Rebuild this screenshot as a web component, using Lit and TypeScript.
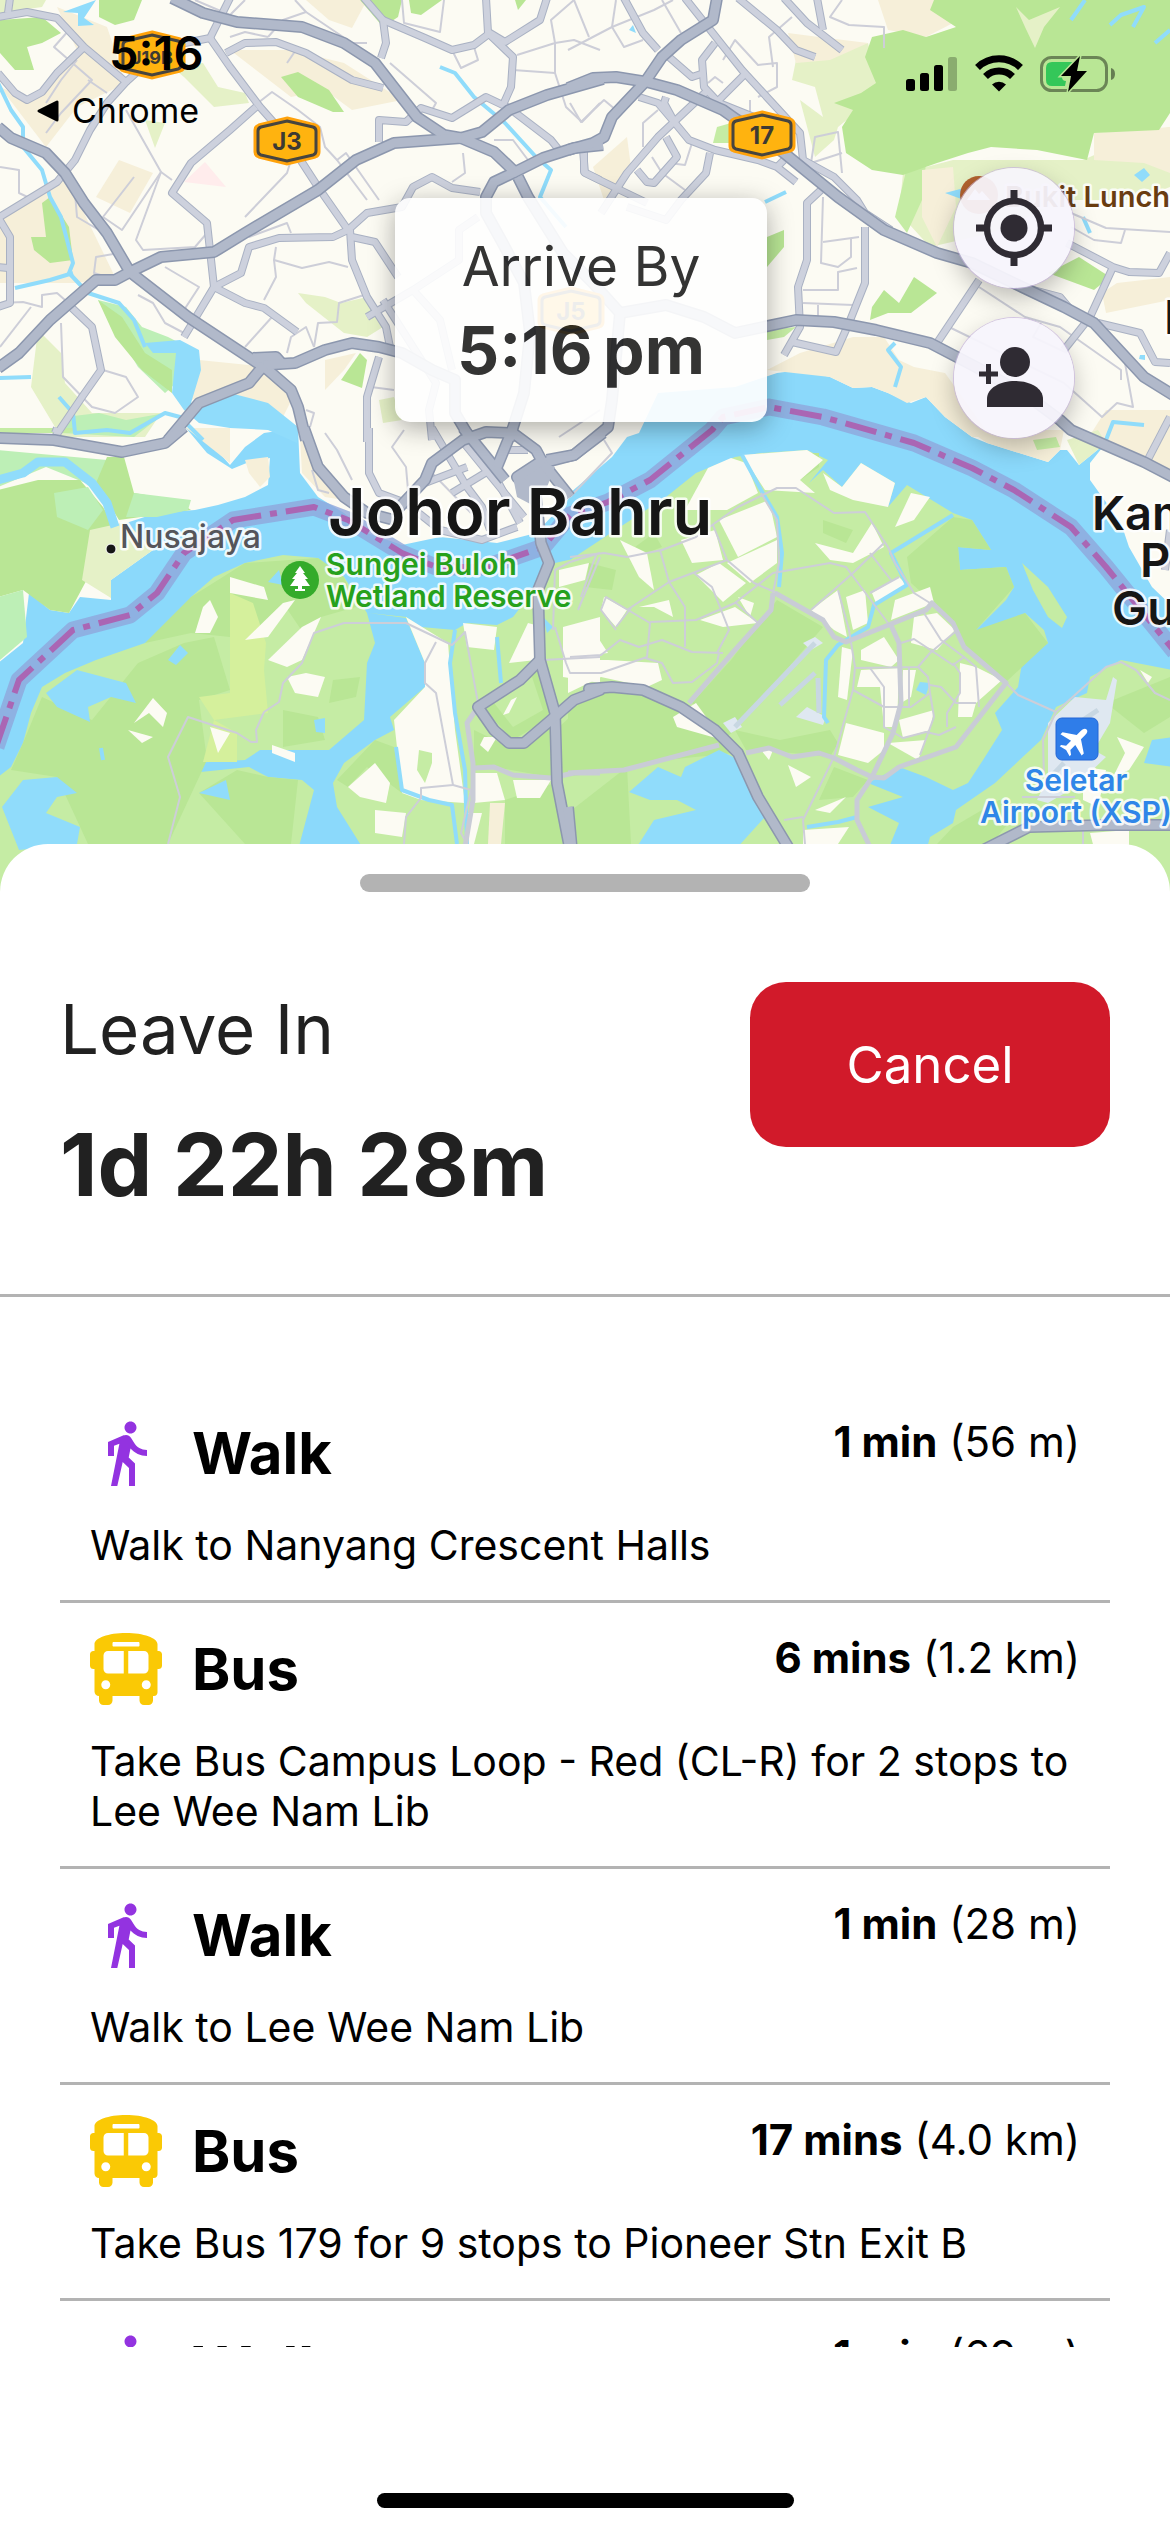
import { LitElement, html, css, svg, nothing } from "lit";
import { customElement, property } from "lit/decorators.js";

type Mode = "walk" | "bus";
interface Leg { mode: Mode; time: string; distance: string; detail?: string }

const LEGS: Leg[] = [
  { mode: "walk", time: "1 min", distance: "(56 m)", detail: "Walk to Nanyang Crescent Halls" },
  { mode: "bus", time: "6 mins", distance: "(1.2 km)", detail: "Take Bus Campus Loop - Red (CL-R) for 2 stops to Lee Wee Nam Lib" },
  { mode: "walk", time: "1 min", distance: "(28 m)", detail: "Walk to Lee Wee Nam Lib" },
  { mode: "bus", time: "17 mins", distance: "(4.0 km)", detail: "Take Bus 179 for 9 stops to Pioneer Stn Exit B" },
  { mode: "walk", time: "1 min", distance: "(69 m)" },
];

/* The map is divided into four tiles; a letter in a point list switches the
   tile that the following points belong to. */
const TILES: Record<string, [number, number]> = { A: [0, 0], B: [570, 0], C: [0, 430], D: [570, 430] };
const points = (list: string): string => {
  let origin = TILES.A;
  const out: string[] = [];
  for (const token of list.trim().split(/\s+/)) {
    if (TILES[token]) { origin = TILES[token]; continue; }
    const [x, y] = token.split(",").map(Number);
    out.push(`${Math.round(origin[0] + (x * 600) / 1568)},${Math.round(origin[1] + y / 3)}`);
  }
  return out.join(" ");
};

const STRAIT = `C -5,700 60,640 75,490 130,540 180,550 210,500 290,510 290,450 400,360 330,280 410,250 510,240 570,225 640,200 700,165 705,85 650,95
  605,118 540,70 485,-5 515,-5 600,105 640,50 690,10 780,-5 785,130 830,200 900,250 960,310 1050,345 1150,320 1300,340 1400,310 1500,190
  D 0,190 110,80 150,20 B 180,1300 230,1180 430,1160 540,1120 600,1110 680,1130 740,1165 790,1160 830,1180 890,1210 930,1190 980,1250 1050,1310
  D 1090,40 1250,95 1280,60 1300,60 1330,105 1400,40 1360,100 1360,150 1440,280 1460,350 1520,470 1575,530 1575,1400 C -5,1400`;
const SOUTH = [
  `C -5,1040 30,1010 60,940 80,850 110,770 170,730 250,690 380,640 440,600 500,500 560,440 640,400 740,375 830,385 900,440 960,550 980,640 960,700
   950,870 860,960 740,960 680,960 640,990 500,1000 500,1030 650,1010 700,1040 790,1050 820,1080 780,1260 -5,1400`,
  `C 965,550 1060,560 1100,590 1190,600 1220,580 1300,585 1340,560 1450,400 1568,370 D 0,390 130,290 250,200 330,130 430,80 500,70 620,60 675,90
   625,160 660,120 710,170 760,100 850,160 830,230 880,165 1000,250 1050,270 1100,360 1015,350 1020,420 1140,410 1160,470 1140,510 1060,600
   1090,620 1140,600 1190,550 1240,600 1250,640 1180,700 1170,770 1110,850 1130,900 1080,990 1040,1060 1000,1080 930,1040 860,1010 780,1060
   870,1100 780,1130 860,1180 830,1260 C 950,1260 880,1130 870,1060 900,1000 980,930 1030,900 1020,860 1110,770 1110,700 1060,565`,
  `D 900,1400 940,1220 1000,1180 1010,1140 1110,1060 1230,930 1270,830 1350,790 1360,740 1440,690 1575,720 1575,920 1520,930 1500,1000 1575,1010 1575,1400`,
  `D 1180,400 1250,470 1300,560 1285,595 1250,560 1210,480`,
];
const LAKES = [
  `C 5,1130 60,1050 150,1040 200,1090 150,1100 120,1150 210,1190 200,1242 50,1260`,
  `C 120,790 200,720 330,760 355,820 290,800 230,830 235,875 150,830`,
  `C 440,690 470,645 490,670 460,705`, `C 820,870 850,865 850,910 825,905`, `C 520,1090 590,1050 600,1110`,
  `D 155,1085 230,1010 290,1040 300,1010 390,960 430,985 480,1100 510,1160 430,1260 170,1260 220,1170 330,1140 280,1110 210,1110`,
  `D 915,755 940,760 930,795 905,780`,
  `A 380,1030 400,1060 460,1060 450,1180 480,1230 520,1270 600,1285 700,1290 775,1330 780,1280 700,1210 600,1180 500,1210 525,1110 520,1050 470,1020`,
  `A 165,35 250,0 220,55 245,75 205,78 205,40`, `B 1475,525 1500,505 1515,525 1495,545`, `B 980,580 1030,565 1030,600`,
  `C 700,455 730,420 740,465`, `C 1420,560 1445,590 1430,610`, `B 1490,1065 1503,1065 1503,1080 1488,1078`, `B 155,90 165,75 172,100`,
];
const CREEKS = [
  `A -5,250 30,330 60,380 60,440 110,510 130,590 160,650 190,790 180,820 230,880 310,910 350,960 380,1040`,
  `A 190,820 130,840 40,865`, `A 530,1320 470,1250 430,1240 340,1300 280,1290 195,1300 190,1240 155,1190`, `A -5,1135 80,1132`,
  `A 1150,200 1190,220 1240,290 1320,370 1400,470 1440,510 1410,590 1480,680`, `B 1345,0 1310,60`, `B 1410,75 1440,45 1500,20 1470,80`, `B 1530,130 1568,90`,
  `B 1340,650 1360,700`, `B 850,1030 830,1050 865,1100 850,1160`, `B 510,605 565,575`, `C 1190,600 1175,700 1190,850 1215,1020 1220,1242`,
  `C 1300,620 1310,760`, `D 450,75 500,180 540,260 555,370 545,470`, `D 1000,255 840,370 880,465 795,525 780,590 700,645 668,690 665,860 675,880`,
  `B 1400,1320 1420,1265 1500,1275`, `C 1035,950 1050,1080 1120,1110 1180,1125 1195,1242`, `D 620,1190 700,1175 750,1160`, `C 265,955 268,990`,
];
const RIVER = `C -5,150 60,130 100,95 170,95 240,160 280,220 300,290`;

/* [fill, outline] */
const DARK = "#b9e695", MID = "#c5eca4", PALE = "#e5f1c7", SAND = "#f6efd9", LAND = "#fcfbf3", MINT = "#bdefb6";
const NORTH_AREAS: [string, string][] = [
  [SAND, `A 150,20 280,80 330,250 200,320 120,440 0,260 80,300 200,150`], [SAND, `A 600,150 760,150 900,190 1050,300 920,330 850,270 760,290`],
  [SAND, `A 310,480 400,520 340,640 250,590`], [SAND, `A 180,530 220,640 300,830 200,850 0,850 0,650 130,560`], [SAND, `A 520,1080 700,1100 770,1180 740,1250 600,1180 500,1200`],
  [SAND, `A 800,0 960,0 920,85 860,60`], [SAND, `A 850,1080 930,1060 900,1110 850,1170`], ["#ffecec", `A 535,485 590,560 480,545`],
  [DARK, `A 0,60 110,50 160,100 110,130 70,140 90,210 40,210 0,160`], [DARK, `A 260,0 370,0 350,60 300,75 260,50`], [PALE, `A 0,0 120,0 110,20 0,40`],
  [DARK, `A 735,230 780,215 860,270 900,337 870,335 780,290`], [DARK, `A 130,590 180,680 190,780 130,790 90,750 80,710 120,710 110,610`],
  [MINT, `A 255,900 330,920 370,980 440,1010 520,1060 500,1110 430,1180 360,1100`], [DARK, `A 255,900 320,950 380,1060 450,1110 450,1180 370,1110 300,1010`],
  [PALE, `A 450,200 530,190 570,260 640,280 650,310 560,320 480,230`], [PALE, `A 380,360 430,370 405,445`],
  [PALE, `A 780,880 850,890 890,910 960,890 1000,980 960,1010 900,1000 800,910`], [PALE, `A 100,990 160,1060 170,1150 240,1240 420,1240 380,1310 160,1310 80,1160`],
  [MINT, `A 170,1250 260,1240 330,1260 430,1240 350,1310 160,1300`], [DARK, `A 940,1060 960,1080 945,1165 890,1140`],
  [DARK, `A 940,0 1050,0 1040,50 1000,80`], [DARK, `A 1070,0 1155,0 1100,45 1075,40`], [DARK, `A 1345,0 1375,0 1355,30`], [PALE, `A 990,1200 1030,1190 1050,1260 1000,1270`],
  [PALE, `B 590,180 780,130 810,280 700,380 690,420 640,470 600,300 660,350 640,260 580,240`], [SAND, `B 570,100 650,110 780,130 680,180 590,190`],
  [SAND, `B 805,0 960,0 1000,70 930,110 830,90`],
  [PALE, `B 870,520 1000,480 1340,480 1500,400 1568,380 1568,560 1480,600 1300,600 1100,700 940,740 860,640`], [SAND, `B 1370,400 1568,380 1568,520 1500,490 1370,480`],
  [SAND, `B 1390,880 1430,850 1568,830 1568,900 1400,940`], [MID, `B 880,500 930,490 920,600 880,700 850,650`],
  [DARK, `B 1000,0 1568,0 1568,340 1540,390 1370,400 1350,480 1220,450 1100,440 1040,460 960,490 870,525 790,510 720,460 710,380 740,330 690,310 760,280 800,250 770,170 790,110 870,90 930,110 1010,80 940,30 950,0`],
  [PALE, `B 1165,20 1200,60 1280,20 1240,80 1215,145 1190,80`], [SAND, `B 920,510 1000,500 1010,620 960,740 920,650`],
  [DARK, `B 1250,820 1330,770 1410,830 1370,870`], [DARK, `B 785,960 790,920 820,870 860,910 900,830 960,880 890,940 830,940`],
  [DARK, `B 515,710 560,690 560,740 515,800`], [MID, `B 515,990 590,980 560,1010 515,1020`], [SAND, `B 150,410 160,500 90,600 60,500`], [MID, `B 385,380 420,370 420,430 375,430`],
  [SAND, `B 515,1110 600,1060 740,1010 820,1010 860,1080 900,1100 980,1120 1100,1310 1050,1310 980,1250 930,1190 880,1210 830,1180 790,1160 740,1165 680,1130`],
  [SAND, `B 1400,1230 1568,1230 1568,1400 1350,1320`], [SAND, `D 1040,0 1290,0 1280,60 1250,95 1090,40`], [PALE, `D 1300,30 1380,0 1400,40 1330,105`], [MID, `D 1210,30 1270,20 1280,50 1220,60`],
  [SAND, `D 1510,80 1568,30 1568,130`],
  [SAND, `C 485,-5 600,-5 600,100`], [SAND, `C 640,90 700,80 705,140 680,170 650,130`], [SAND, `C 785,20 830,110 900,210 850,200 790,130`],
  [MINT, `C -5,60 280,90 270,180 120,110 -5,170`], [MID, `C -5,-5 200,-5 180,10 -5,10`],
  [DARK, `C -5,180 100,150 210,150 270,230 300,290 235,310 240,420 180,550 130,540 60,480 -5,500`], [MINT, `C -5,500 60,480 70,620 0,690`],
  [MINT, `C 140,190 230,170 270,240 230,300 150,260`],
  [DARK, `C 280,80 325,80 350,190 460,210 500,240 310,270 250,160`], [MINT, `C 350,190 500,210 490,240 410,260 330,260`], [PALE, `C 235,300 330,275 400,360 290,450 290,505 215,450`],
];
const SOUTH_AREAS: [string, string][] = [
  [DARK, `C 500,500 640,400 830,385 900,440 930,530 840,560 800,620 740,520 640,630 690,700 640,780 600,620 500,610 380,640`],
  [DARK, `C 60,940 110,800 240,870 360,700 480,640 560,620 600,780 520,810 540,990 440,1242 230,1242 150,1040 30,1020`],
  [DARK, `C 620,1020 700,1040 780,1050 760,1242 640,1242 520,1090`], ["#d5f09c", `C 600,490 660,520 695,640 690,720 700,850 560,870 520,800 600,790`],
  ["#d5f09c", `C 560,870 620,910 620,995 530,995`], [DARK, `C 870,750 940,740 930,800 860,820`], [DARK, `C 740,840 830,860 850,930 740,950`],
  [DARK, `C 980,930 1030,950 1050,1090 960,1010 910,1070 880,1050`], [DARK, `C 1240,900 1330,950 1440,880 1440,1040 1290,1010 1240,1010`],
  [DARK, `C 1460,890 1568,780 1568,1030 1470,1040`], [DARK, `C 1320,1110 1450,1060 1470,1242 1320,1242`], [DARK, `C 1260,830 1400,700 1440,860 1340,930`],
  [MID, `C 1290,820 1390,740 1420,840 1340,890`],
  [DARK, `D -5,800 100,785 200,790 300,850 430,970 250,990 150,1020 -5,1020`], [DARK, `D 540,510 660,590 430,900 410,920 320,820 420,690`],
  [DARK, `D 880,380 1000,260 1050,270 1100,360 1015,350 1020,420 1140,410 1160,470 1060,600 1190,550 1250,640 1140,755 1030,650 1000,580 940,510 890,460`],
  [DARK, `D 430,900 550,930 680,900 700,940 680,980 580,970 460,960`], [DARK, `D 570,70 650,70 650,110 600,150 560,110`], [DARK, `D -5,1150 150,1010 160,1242 -5,1242`],
  [DARK, `D 690,1010 780,1050 740,1100 650,1110`], [DARK, `D 170,350 220,310 240,350 200,370`], [DARK, `D 50,400 120,420 110,480 40,470`], [DARK, `D 660,270 740,300 720,340 660,310`],
  [LAND, `C 600,440 690,470 700,510 600,490`], [LAND, `C 550,510 570,560 550,610 510,610 530,530`], [LAND, `C 740,520 770,510 700,620 640,630`],
  [LAND, `C 790,590 840,560 820,610 790,690 750,710 700,690`], [LAND, `C 750,740 800,730 850,740 830,800 770,790`], [LAND, `C 400,805 437,850 425,890 390,850 350,880`],
  [LAND, `C 335,900 400,920 370,940`], [LAND, `C 1060,560 1170,640 1190,900 1215,1120 1100,1110 1050,1090 1030,870 1110,770 1110,700`], [LAND, `C 1210,580 1300,590 1290,660 1220,650`],
  [MID, `C 1095,960 1130,970 1130,1000 1110,1060 1090,1020`],
  [LAND, `C 1380,580 1420,590 1400,690 1330,700`], [LAND, `C 1470,590 1568,560 1568,760 1470,740`], [LAND, `C 910,1070 980,1000 1020,1060 1010,1120 940,1100`],
  [LAND, `C 1240,1030 1300,1030 1320,1110 1240,1120`], [LAND, `C 550,890 600,910 570,970`], [LAND, `C 980,1140 1060,1150 1050,1220 980,1210`], [LAND, `C 710,945 770,970 770,995 710,970`],
  [LAND, `C 1340,1050 1440,1050 1410,1105 1350,1105`], [LAND, `C 1460,420 1540,400 1530,450 1460,470`], [LAND, `C 1265,920 1300,920 1275,965 1255,945`], [LAND, `C 1220,1150 1260,1150 1240,1242 1220,1242`],
  [SAND, `C 1280,1120 1320,1120 1310,1242 1275,1242`], [LAND, `C 1350,800 1330,850 1315,855 1335,810`],
  [LAND, `D 360,115 420,85 460,100 490,190 410,240 300,240`], [LAND, `D 450,75 620,60 660,90 600,150 640,190 510,180`],
  [LAND, `D 660,130 710,170 760,100 850,160 830,230 740,210 680,180`], [LAND, `D 390,270 520,210 540,320 440,380`], [LAND, `D 410,400 540,330 540,400 470,460`],
  [LAND, `D 130,330 200,370 220,480 180,440`], [LAND, `D 290,330 380,300 400,390 320,400`], [LAND, `D 640,340 740,370 790,280 820,350 740,400 680,390`],
  [LAND, `D 390,400 460,460 400,515 330,435`], [LAND, `D 630,540 700,480 725,620 690,600`], [LAND, `D 890,190 940,200 900,270 850,290`], [LAND, `D 790,490 860,440 880,465 800,520`],
  [LAND, `D 850,510 940,470 950,520 840,570`], [LAND, `D 900,560 960,550 1005,600 960,660 890,640`], [LAND, `D 760,720 860,715 855,890 820,890 810,770 750,770`],
  [LAND, `D 710,650 740,660 725,810 700,800`], [LAND, `D 860,870 950,840 940,900 870,925`], [LAND, `D 1060,710 1130,750 1060,820 1050,860 1015,860 1020,700`],
  [LAND, `D 830,940 930,930 910,990`], [LAND, `D 720,880 820,910 820,960 780,1000 700,975`], [LAND, `D 570,1005 630,1040 590,1070`], [LAND, `D 270,860 330,820 400,930 280,890`],
  [LAND, `D 640,1140 720,1100 680,1150`], [LAND, `D 610,1200 730,1190 700,1242 610,1242`], [LAND, `D 760,660 820,620 860,690 840,710 760,690`], [LAND, `D -5,590 60,600 100,670 -5,680`],
  [LAND, `D -5,690 100,690 230,700 240,750 200,770 80,740 -5,790`], [LAND, `D 90,500 150,540 120,590 80,540`], [LAND, `D 180,530 260,510 270,560 220,530`], [LAND, `D 340,570 430,530 490,580 400,590`],
  [LAND, `D 720,500 770,480 780,580 740,600`], [LAND, `D 500,960 530,960 520,990`], [LAND, `D 440,500 480,520 470,560`], [LAND, `D 870,720 905,720 890,800 865,820`],
  [LAND, `D 1430,920 1500,950 1460,1020 1420,1040 1450,970`], [LAND, `D 1340,1010 1400,1020 1380,1130 1340,1110`], [LAND, `D 1490,720 1520,740 1510,760`], [LAND, `D 1360,1210 1460,1200 1460,1300 1380,1300`],
  [DARK, `D 1400,820 1568,740 1568,860 1500,910`], [DARK, `D 1000,1190 1120,1110 1180,1130 1100,1242 960,1242`],
  ["#dfe8f1", `D 1250,880 1320,800 1400,810 1420,740 1430,750 1410,880 1370,960 1400,980 1320,1070 1250,1120 1220,1110 1250,1040`],
  ["#dfe8f1", `D 400,880 430,860 450,890 420,910`], ["#dfe8f1", `D 610,640 640,620 660,640 630,660`], ["#dfe8f1", `D 590,860 620,830 670,860 660,885`],
];

const MINOR = [
  `A 700,110 640,95 600,110`, `A 180,90 140,140 240,240 160,340 120,400`, `A 230,240 280,280`, `A 200,180 160,240 120,310`, `A 330,330 420,515 355,720 375,750 510,740 540,700`, `A 350,530 270,650 320,690 420,515 450,540`,
  `A 640,340 710,275 780,330 835,380 850,440 880,480 905,460 990,600`, `A 880,480 960,600`, `A 1050,0 1055,70 1150,95 1160,0`, `A 1020,190 1140,310 1130,330`, `A 1340,210 1450,220 1450,130 1500,120 1568,150`,
  `A 1350,165 1450,130 1440,60 1500,0`, `A 1450,220 1480,320 1520,365 1568,310`, `A 430,800 520,860 480,930`, `A 720,740 715,780 790,805 860,785 910,800`, `A 715,780 720,830 690,900`, `A 710,950 640,1040`,
  `A 360,885 400,910 430,970 480,1000`, `A 820,1040 830,970 880,965 885,910 950,885`, `A 160,970 165,1130 240,1220 300,1240 360,1190 330,1130 270,1110`,
  `A 0,910 60,905 110,920 110,885 150,880 190,920`, `A 0,1040 80,920`, `A 0,500 50,510 50,580 90,600`, `A 195,580 200,650 260,690`, `A 310,760 250,770 245,820 280,830`, `A 640,650 750,520 760,480`,
  `A 1210,460 1215,520 1180,545`, `A 1290,420 1340,420 1380,480`, `A 970,1160 1030,1170`, `A 750,1060 760,1010 800,980 820,1040`, `A 650,710 750,670 760,700`, `A 510,0 600,45 640,0`, `A 700,110 740,60 800,35 770,0`,
  `A 800,35 920,130 960,130`, `A 750,190 780,140`, `A 1180,150 1205,205 1250,180 1240,140`, `A 800,1230 820,1240 810,1280`,
  `B -5,150 110,80 220,30 270,0`, `B 10,0 50,110`, `B 110,80 140,140 190,120`, `B 110,80 120,0`, `B 240,0 290,100`, `B 400,180 430,120 490,195 540,190 540,260 490,290`, `B 580,50 520,110 530,200`,
  `B 710,0 680,50 730,75 820,80 820,145`, `B 630,490 640,410 700,395 710,520`, `B 630,490 710,460`, `B 190,440 190,370 230,330`, `B 660,590 655,790 700,800 735,770 735,715`, `B 660,725 755,712`,
  `B 610,870 700,870 700,815 750,805`, `B 610,910 740,915`, `B 648,915 648,950`, `B 1070,860 1190,950 1280,980 1440,1110 1440,1140`, `B 1310,640 1400,685 1568,695`,
  `B 1450,690 1440,730 1370,720 1310,680`, `B 990,980 1290,1150 1390,1250 1430,1210 1470,1220 1450,1090`, `B 0,310 30,365 90,300 120,330`, `B 360,250 380,230 400,250`, `B 470,340 470,300`,
  `B 320,430 300,495 260,490`, `B 215,470 240,520 300,570`, `B 1230,970 1210,1010 1300,1060`,
  `C 440,1242 470,1100 440,980 490,860 620,910 655,935 672,935 670,900 690,845 730,815 740,760 790,700 820,610 900,578 1060,580 1180,645 1215,605 1250,820`,
  `C 1140,635 1110,700 1110,760 1140,790 1185,1065 1100,1075 1100,1105 1060,1160 1055,1242`, `C 1185,1065 1230,1080 1205,1210 1220,1242`, `C 1420,690 1568,680`, `C 1445,600 1450,420 1490,395 1568,370`,
  `C 1450,590 1480,700 1490,730 1568,730`, `C 1055,0 1025,50 1060,110 1065,180`, `C 850,10 880,60 920,150`, `C 1130,130 1230,250`, `C 1460,20 1568,-60`, `C 1568,380 1510,540`,
  `C 815,120 830,180 860,190`,
  `D 0,200 110,70 90,30`, `D 0,380 90,370 150,380 240,360 330,320 380,280 440,230 540,175 590,175 690,250 770,245 830,350 850,400 900,490 940,520`,
  `D 375,285 410,390 480,460 540,490`, `D 500,190 540,270 547,400 530,490`, `D 150,540 260,455 410,390`, `D 235,360 260,455 300,530 300,650`, `D 325,430 370,470 415,600 385,670`,
  `D 120,600 80,540 95,500 210,580 200,680 80,730 0,730`, `D 0,680 80,675 130,630 180,650 240,630 320,665 400,670`, `D 120,590 160,535`, `D 210,575 330,570 430,520 530,430 680,400 720,410 830,580`,
  `D 630,540 740,430 820,340`, `D 785,370 840,450`, `D 785,490 860,440`, `D 430,515 490,580`, `D 700,480 730,600 745,710 740,780 690,980 610,1170 615,1242`, `D 745,715 910,710 940,670 1005,605`,
  `D 740,780 820,830 890,830 940,790 935,740 910,710`, `D 785,715 820,770 820,890 870,925 930,905 965,915 1010,890`, `D 920,540 970,630 1030,680 1060,710 1070,830`, `D 865,640 900,628 1000,705 1030,680`,
  `D 940,765 970,770 1010,820 1060,820`, `D 940,790 952,860 915,975`, `D 1000,700 1020,730 1020,790 985,850 985,890`, `D 195,685 240,700 270,760 320,755 385,700 390,670`, `D 885,715 885,830`,
  `D 1140,760 1170,795 1270,845 1235,930 1240,1040`, `D 1270,845 1400,710 1440,695 1480,720 1530,790 1568,810`, `D 30,500 60,400 70,370`, `D 560,1170 610,1160`, `D 1180,1100 1320,1100`, `D 1340,1200 1340,1300`,
];
const SECONDARY = [
  `A -5,50 70,35 150,55 220,140 330,245 280,310 235,390 195,480 150,545 -5,655`, `A 20,40 25,-5`, `A 220,140 150,220 110,275 70,300 40,280 -5,220`, `A 330,245 430,140 550,115 600,-5`,
  `A 550,115 600,200 680,320 740,400 830,560 910,690 960,640 1050,620 1080,560 1130,530 1180,565 1255,577`, `A 670,320 600,390 500,490 450,580 540,670 560,860 480,1010`,
  `A 560,860 640,910 690,925 775,995`, `A 560,860 630,820 650,740 730,715 870,710 910,690`, `A 915,690 920,780 960,890 1010,980 1020,1040`, `A 920,710 980,725 1040,830`, `A 590,160 640,130 720,125 800,160 920,240 1000,265`,
  `A 950,-5 1000,60 1010,130 995,175`, `A 1000,60 1110,115 1180,150 1240,135 1280,100 1320,125 1410,60 1430,-5`, `A 1270,-5 1275,100 1340,170 1335,260 1315,315`,
  `A 990,425 990,360 1060,365 1100,325 1180,355 1270,290 1330,325 1440,420 1460,450`, `A -5,650 25,710 25,910 -5,920`, `A 185,920 240,980 265,1110 215,1190 145,1310`, `A 960,1325 960,1190 990,1070`,
  `A 1525,450 1525,515 1568,540`, `A 1250,650 1200,690 1200,780 1080,870 960,950`, `A -5,800 20,805`, `A 1130,1320 1120,1230 1140,1150 1000,900`, `A 1080,870 1150,960 1180,1110`,
  `B 140,-5 190,100 230,150`, `B 300,-5 450,210 600,400 610,480 690,530 750,600 770,640 840,690`, `B 440,-5 540,90 590,150 640,170`, `B 560,-5 620,70 710,150`, `B 645,-5 660,90`, `B 380,130 345,180 350,260 390,310 480,350`,
  `B 260,170 320,230 350,220`, `B 180,290 230,310 275,370 310,420 380,450 490,480 540,500 590,545`, `B 360,270 230,410 150,520 80,640`, `B 460,220 390,300`, `B 250,410 280,470 220,550 200,545 175,510`,
  `B 365,460 355,520 290,600 250,660 150,620`, `B 35,450 40,520 130,570 200,610`, `B 655,570 620,610 620,780 595,860 600,980 558,1065`, `B 770,680 770,850 730,970 695,1055 580,1025`, `B 1070,840 960,1030`,
  `B 1300,730 1420,800 1460,815 1540,820 1568,760`, `B 1420,800 1360,950 1290,1050`, `B 1380,970 1490,1000 1530,1085 1568,1090`, `B 1180,860 1280,890 1310,930`, `B 1568,1250 1500,1400`, `B 250,290 245,310 275,370`,
  `B 540,500 560,480`, `C 965,-5 965,130 990,190 1060,220 1150,300 1260,330 1350,290`, `C 1110,160 1220,110`, `C 1130,-5 1220,170 1260,230 1280,300`, `C 1200,20 1370,260`, `C 1180,190 1280,120`, `C 145,10 150,-5`, `C 1300,150 1360,280`,
  `C 1322,60 1380,60`, `D 1568,300 1555,420`,
];
const PLAIN = [
  `D 535,490 660,570 690,620 720,635 930,540 945,520 1000,580 1030,650 1140,760 1010,950 860,1010 820,1045 790,1040 750,1020 690,985 650,970 580,980 520,955 460,970`,
  `D 530,490 525,540 430,660 310,820`, `D 835,580 860,640 865,820 845,910 790,1040 750,1110 750,1170 785,1250`, `C 1568,1028 1500,1030 1440,1045 1340,1035 1290,1010 1240,1015`, `D -5,1030 140,1020 390,945`,
  `C 1250,830 1220,880 1235,1000 1235,1110 1215,1250`,
];
const MAJOR = [
  `A 450,-5 530,40 620,65 790,80 900,130 980,190 1090,350 1160,405 1205,415 1260,395 1330,330 1430,285 1575,238`, `A 1205,415 1290,455 1345,515 1420,475 1500,445 1575,435`,
  `A 1345,515 1290,545 1270,590 1270,640 1310,720 1370,850 1385,1000 1370,1180 1330,1320`, `A 1355,530 1380,590 1470,760 B 60,850 130,940 110,1200 100,1280 C 1500,75 1420,100`,
  `A -5,380 30,415 120,460 170,520 220,610 280,700 340,815 490,950 660,1080 700,1110 760,1170 780,1220 800,1320`,
  `A -5,1105 50,1060 130,960 250,840 300,840 340,815 420,770 560,755 640,700 830,570 930,480 1030,430 1205,415`, `A 660,1075 720,1070 740,1095`,
  `A 690,1095 770,1090 850,1050 920,1030 990,1040 1050,1060 1130,1110 1190,1140 1190,1240 1230,1320`, `A 690,1095 650,1150 520,1210 440,1320`,
  `B -5,265 60,235 120,230 200,245 280,270 400,330 560,460 700,590 820,690 960,760 1050,790 1180,860 1290,920 1370,970 1500,1130 1575,1185`,
  `B 385,-5 375,60 290,120 240,170 195,245 110,350 90,410 60,430 -5,450`, `B 130,940 250,915 350,950 430,1000 590,960 690,965 800,990 940,1030 1060,1100 1200,1190 1280,1260 D 1310,0 1500,95 1575,140`,
  `C -5,25 140,30 320,65 430,40 480,-10`, `C 795,-5 830,110 900,200 960,250 1030,270`, `C 1030,250 1110,150 1130,100 1210,30 1270,5 1340,10 1400,60 1420,100 1490,200`, `C 1210,-5 1320,150`, `C 1340,-5 1300,110`, `C 1430,90 1500,75 1575,10`,
  `C 1420,90 1350,140 1400,200 1415,340 1435,400 1405,480 1410,690 1450,850 1455,1060 1490,1260`,
  `C 1410,690 1360,750 1250,830 1290,900 1330,940 1370,940 1440,870 1500,810 1568,780 D 50,778 110,770 190,780 290,830 380,900 440,970 490,1100 575,1260`, `D -5,1130 5,1260`, `D 1080,1260 1200,1190 1400,1185 1575,1185`,
];
const BORDER = `C -10,950 50,750 190,600 340,555 410,490 480,370 610,270 820,230 910,270 1050,370 1140,410 1270,410 1420,350 D 0,255 100,215 210,150 370,0
  B 400,1250 520,1220 660,1250 900,1330 D 1050,115 1160,180 1310,290 1400,410 1580,665`;

const lines = (list: string[], cls: string) => list.map((l) => svg`<polyline class=${cls} points=${points(l)}></polyline>`);
const areas = (list: [string, string][]) => list.map(([fill, l]) => svg`<polygon fill=${fill} points=${points(l)}></polygon>`);
const shield = (x: number, y: number, label: string, cls = "") => svg`
  <g transform="translate(${x} ${y})">
    <path d="M0-22 28-15Q31-14 31-11V11Q31 14 28 15L0 22-28 15Q-31 14-31 11V-11Q-31-14-28-15Z" fill="#ffb30f" stroke="#ffa20a" stroke-width="5"></path>
    <path d="M0-20 26-14Q29-13 29-10V10Q29 13 26 14L0 20-26 14Q-29 13-29 10V-10Q-29-13-26-14Z" fill="#ffb30f" stroke="#47453f" stroke-width="3"></path>
    <text class="route ${cls}" y="9">${label}</text>
  </g>`;

@customElement("route-map")
export class RouteMap extends LitElement {
  static styles = css`
    :host { display: block; }
    svg { display: block; width: 100%; height: 100%; font-family: Inter, "Liberation Sans", sans-serif; }
    polyline { fill: none; stroke-linejoin: round; }
    .creek { stroke: #90dcfb; stroke-width: 4; }
    .river { stroke: #90dcfb; stroke-width: 9; }
    .minor { stroke: #cdced8; stroke-width: 2; }
    .plain { stroke: #c9ccd6; stroke-width: 5; }
    .secondary-edge { stroke: #a9b1c3; stroke-width: 8; }
    .secondary { stroke: #cdd1dd; stroke-width: 6; }
    .major-edge { stroke: #8c97ae; stroke-width: 12; }
    .major { stroke: #b1b9ca; stroke-width: 9; }
    .runway { stroke: #c8d7e2; stroke-width: 5; }
    .border-band { stroke: #8fa6dc; stroke-opacity: 0.8; stroke-width: 17; }
    .border-line { stroke: #aa66b4; stroke-width: 6; stroke-dasharray: 32 9 7 9; }
    text { paint-order: stroke; stroke: #ffffff; stroke-opacity: 0.85; stroke-width: 5; stroke-linejoin: round; font-weight: 600; }
    .route { font-size: 24px; font-weight: 700; fill: #3d3a33; stroke: none; text-anchor: middle; }
    .route-long { font-size: 18px; }
    .city { font-size: 65px; fill: #161616; }
    .town { font-size: 47px; fill: #161616; }
    .suburb { font-size: 32px; font-weight: 500; fill: #55555a; }
    .park { font-size: 30px; fill: #26a11c; }
    .peak { font-size: 29px; fill: #6a3d12; }
    .airport { font-size: 30px; fill: #2f86e8; text-anchor: middle; }
  `;
  render() {
    return html`<svg viewBox="0 0 1170 892" preserveAspectRatio="xMidYMin slice" role="img" aria-label="Map of Johor Bahru">
      <rect width="1170" height="892" fill=${LAND}></rect>
      <polygon points=${points(STRAIT)} fill="#8bd9fb"></polygon>
      ${areas(NORTH_AREAS)}
      ${SOUTH.map((l) => svg`<polygon fill=${MID} points=${points(l)}></polygon>`)}
      ${areas(SOUTH_AREAS)}
      ${LAKES.map((l) => svg`<polygon fill="#90dcfb" points=${points(l)}></polygon>`)}
      ${lines(CREEKS, "creek")}${lines([RIVER], "river")}
      ${lines([`D 430,890 640,640`, `D 550,825 640,730`, `D 648,745 650,850`, `D 1290,1000 1250,1050`, `D 1340,870 1380,840`], "runway")}
      ${lines(MINOR, "minor")}${lines(PLAIN, "plain")}
      ${lines(SECONDARY, "secondary-edge")}${lines(SECONDARY, "secondary")}
      ${lines([BORDER], "border-band")}${lines([BORDER], "border-line")}
      ${lines(MAJOR, "major-edge")}
      <polygon points=${points("C 1340,140 1400,90 1450,110 1430,170 1400,230 1350,200")} fill="#b1b9ca"></polygon>
      ${lines(MAJOR, "major")}
      ${shield(152, 55, "J19B", "route-long")}${shield(287, 141, "J3")}${shield(762, 135, "17")}${shield(571, 311, "J5")}
      <text class="city" x="328" y="535">Johor Bahru</text>
      <circle cx="111" cy="549" r="5" fill="#161616" stroke="#fff" stroke-width="1"></circle>
      <text class="suburb" x="120" y="548">Nusajaya</text>
      <circle cx="300" cy="580" r="19" fill="#34ab2a"></circle>
      <path d="M300 566l5 7h-2l5 6h-3l5 7h-8v3h3v2h-10v-2h3v-3h-8l5-7h-3l5-6h-2z" fill="#fff"></path>
      <text class="park" x="326" y="575">Sungei Buloh</text>
      <text class="park" x="326" y="607">Wetland Reserve</text>
      <circle cx="979" cy="195" r="19" fill="#b2622e"></circle>
      <path d="M967 200l8-11 4 5 3-3 8 9z" fill="#fff"></path>
      <text class="peak" x="1005" y="207">Bukit Lunch</text>
      <text class="town" x="1164" y="334">P</text>
      <text class="town" x="1092" y="530">Kam</text>
      <text class="town" x="1140" y="577">P</text>
      <text class="town" x="1112" y="625">Gu</text>
      <rect x="1056" y="718" width="42" height="42" rx="6" fill="#2f7de9" stroke="#2567d6"></rect>
      <path d="M0-15c2 0 3 2 3 5v6l12 8v3L3 4v7l4 3v2l-7-2-7 2v-2l4-3V4l-12 3V4l12-8v-6c0-3 1-5 3-5z" transform="translate(1076 740) rotate(45)" fill="#fff"></path>
      <text class="airport" x="1076" y="791">Seletar</text>
      <text class="airport" x="1076" y="823">Airport (XSP)</text>
    </svg>`;
  }
}

const WALK = svg`<svg viewBox="0 0 24 24" aria-hidden="true"><path fill="#9333e0" d="M13.5 5.5c1.1 0 2-.9 2-2s-.9-2-2-2-2 .9-2 2 .9 2 2 2zM9.8 8.9L7 23h2.1l1.8-8 2.1 2v6h2v-7.5l-2.1-2 .6-3C14.8 12 16.8 13 19 13v-2c-1.9 0-3.5-1-4.3-2.4l-1-1.6c-.4-.6-1-1-1.7-1-.3 0-.5.1-.8.1L6 8.300V13h2V9.600l1.800-.7"></path></svg>`;
const BUS = svg`<svg viewBox="0 0 512 512" aria-hidden="true"><path fill="#fac905" d="M488 128h-8V80c0-44.800-99.200-80-224-80S32 35.200 32 80v48h-8c-13.250 0-24 10.740-24 24v80c0 13.250 10.750 24 24 24h8v160c0 17.670 14.330 32 32 32v32c0 17.670 14.330 32 32 32h32c17.670 0 32-14.330 32-32v-32h192v32c0 17.670 14.330 32 32 32h32c17.670 0 32-14.330 32-32v-32h6.400c16 0 25.600-12.800 25.600-25.600V256h8c13.250 0 24-10.750 24-24v-80c0-13.260-10.750-24-24-24zM160 72c0-4.420 3.580-8 8-8h176c4.420 0 8 3.580 8 8v16c0 4.420-3.580 8-8 8H168c-4.420 0-8-3.580-8-8V72zm-48 328c-17.670 0-32-14.330-32-32s14.330-32 32-32 32 14.330 32 32-14.330 32-32 32zm128-112H128c-17.670 0-32-14.330-32-32v-96c0-17.670 14.330-32 32-32h112v160zm32 0V128h112c17.670 0 32 14.330 32 32v96c0 17.670-14.330 32-32 32H272zm128 112c-17.670 0-32-14.330-32-32s14.330-32 32-32 32 14.330 32 32-14.330 32-32 32z"></path></svg>`;

@customElement("route-leg")
export class RouteLeg extends LitElement {
  @property({ attribute: false }) leg!: Leg;
  static styles = css`
    :host { display: flex; flex-direction: column; gap: 30px; padding: 30px; border-bottom: 3px solid #b3b3b3; }
    .head { display: flex; align-items: flex-start; gap: 30px; }
    .head svg { width: 72px; height: 72px; flex: none; }
    h2 { flex: 1; margin: 0; font-size: 58px; line-height: 73px; font-weight: 700; }
    p { margin: 0; font-size: 41px; line-height: 50px; }
    .time { font-size: 42px; }
    strong { font-weight: 700; }
  `;
  render() {
    const { mode, time, distance, detail } = this.leg;
    return html`<div class="head">
        ${mode === "walk" ? WALK : BUS}
        <h2>${mode === "walk" ? "Walk" : "Bus"}</h2>
        <p class="time"><strong>${time}</strong> ${distance}</p>
      </div>
      ${detail ? html`<p>${detail}</p>` : nothing}`;
  }
}

@customElement("app-root")
export class AppRoot extends LitElement {
  static styles = css`
    :host { display: flex; flex-direction: column; height: 100vh; overflow: hidden; position: relative; background: #fff; color: #000;
      font-family: Inter, "Liberation Sans", sans-serif; }
    button { font: inherit; border: 0; padding: 0; cursor: pointer; }
    .top { position: relative; flex: none; height: 892px; }
    route-map { position: absolute; inset: 0; }
    .status { position: absolute; inset: 0 0 auto 0; display: flex; justify-content: space-between; align-items: flex-start; padding: 24px 54px 0 36px; }
    .clock { display: flex; flex-direction: column; }
    time { padding-left: 73px; font-size: 47px; line-height: 58px; font-weight: 600; }
    .back { display: flex; align-items: center; gap: 12px; background: none; color: #000; font-size: 34px; line-height: 58px; }
    .back svg { width: 24px; height: 24px; }
    .signals { display: flex; align-items: center; gap: 16px; padding-top: 31px; }
    .signals svg { display: block; height: 38px; }
    .arrive { position: absolute; top: 198px; left: calc(50% - 190px); width: 372px; height: 224px; box-sizing: border-box; padding-top: 30px;
      border-radius: 15px; background: #fff; color: #212121; opacity: 0.91; text-align: center; box-shadow: 0 6px 26px rgba(0, 0, 0, 0.35); }
    .arrive-label { font-size: 55px; line-height: 76px; }
    .arrive-time { font-size: 66px; line-height: 92px; font-weight: 700; }
    .tools { position: absolute; top: 168px; right: 96px; display: flex; flex-direction: column; gap: 30px; }
    .tool { width: 120px; height: 120px; border-radius: 50%; background: rgba(247, 244, 252, 0.94); box-shadow: 0 0 0 1px rgba(200, 180, 225, 0.7), 0 10px 24px rgba(0, 0, 0, 0.25); }
    .tool svg { display: block; width: 120px; height: 120px; }
    .sheet { position: relative; display: flex; flex-direction: column; flex: 1; min-height: 0; margin-top: -48px; border-radius: 48px 48px 0 0; background: #fff; }
    .grip { align-self: center; flex: none; width: 450px; height: 18px; margin-top: 30px; border-radius: 9px; background: #b3b3b3; }
    header { display: flex; justify-content: space-between; align-items: flex-start; padding: 90px 60px 75px; border-bottom: 3px solid #b3b3b3; color: #212121; }
    .lead { display: flex; flex-direction: column; gap: 34px; }
    .lead-label { font-size: 69px; line-height: 94px; }
    .lead-time { margin: 0; font-size: 87px; line-height: 109px; font-weight: 700; }
    .cancel { width: 360px; height: 165px; border-radius: 36px; background: #d11a2a; color: #fff; font-size: 51px; }
    ul { flex: 1; min-height: 0; margin: 90px 60px 0; padding: 0; list-style: none; overflow-y: auto; scrollbar-width: none; }
    footer { display: flex; flex: none; justify-content: center; align-items: flex-end; height: 185px; padding-bottom: 24px; box-sizing: border-box; }
    .home { width: 417px; height: 15px; border-radius: 8px; background: #000; }
  `;
  render() {
    return html`
      <div class="top">
        <route-map></route-map>
        <div class="arrive">
          <div class="arrive-label">Arrive By</div>
          <div class="arrive-time">5:16\u202fpm</div>
        </div>
        <div class="tools">
          <button class="tool" aria-label="Centre on my location"><svg viewBox="0 0 120 120" aria-hidden="true">
            <circle cx="60" cy="60" r="13.5" fill="#2f2b33"></circle>
            <circle cx="60" cy="60" r="27" fill="none" stroke="#2f2b33" stroke-width="6.5"></circle>
            <path d="M60 22v12M60 86v12M22 60h12M86 60h12" stroke="#2f2b33" stroke-width="7"></path></svg></button>
          <button class="tool" aria-label="Add a contact"><svg viewBox="0 0 120 120" aria-hidden="true">
            <circle cx="61" cy="44" r="15" fill="#2f2b33"></circle>
            <path d="M33 89V81C33 70 46 63 61 63S89 70 89 81V89Z" fill="#2f2b33"></path>
            <path d="M34.500 46v20M25 56h19" stroke="#2f2b33" stroke-width="5"></path></svg></button>
        </div>
        <div class="status">
          <div class="clock">
            <time>5:16</time>
            <button class="back"><svg viewBox="0 0 24 24" aria-hidden="true"><path d="M3 12 21 3V21Z" stroke="#000" stroke-width="3" stroke-linejoin="round"></path></svg>Chrome</button>
          </div>
          <div class="signals">
            <svg viewBox="0 0 52 38" width="52" aria-hidden="true">
              <rect y="24" width="9" height="12" rx="2.5"></rect><rect x="14" y="18" width="9" height="18" rx="2.5"></rect>
              <rect x="28" y="10" width="9" height="26" rx="2.5"></rect><rect x="42" y="2" width="9" height="34" rx="2.5" opacity=".25"></rect></svg>
            <svg viewBox="0 0 50 38" width="50" aria-hidden="true">
              <path d="M3.5 12.500A31 31 0 0 1 46.500 12.500" fill="none" stroke="#000" stroke-width="7"></path>
              <path d="M11.500 21.500A19.500 19.500 0 0 1 38.500 21.500" fill="none" stroke="#000" stroke-width="7"></path>
              <path d="M25 36.500 18 29.500A10 10 0 0 1 32 29.500Z"></path></svg>
            <svg viewBox="0 0 76 38" width="76" aria-hidden="true">
              <rect x="1.5" y="2.500" width="65" height="33" rx="10" fill="none" stroke="#000" stroke-opacity=".42" stroke-width="3"></rect>
              <path d="M71 13Q75 14 75 19T71 25Z" opacity=".45"></path>
              <path d="M12 7H33L22 22Q22 26 26 26L25 31H12Q6 31 6 25V13Q6 7 12 7Z" fill="#34c759"></path>
              <path d="M40 1 21 21H31L28 37 47 16H37Z" stroke="#b9e695" stroke-width="3" paint-order="stroke"></path></svg>
          </div>
        </div>
      </div>
      <section class="sheet">
        <div class="grip"></div>
        <header>
          <div class="lead">
            <div class="lead-label">Leave In</div>
            <h1 class="lead-time">1d 22h 28m</h1>
          </div>
          <button class="cancel">Cancel</button>
        </header>
        <ul>${LEGS.map((leg) => html`<li><route-leg .leg=${leg}></route-leg></li>`)}</ul>
        <footer><div class="home"></div></footer>
      </section>`;
  }
}
